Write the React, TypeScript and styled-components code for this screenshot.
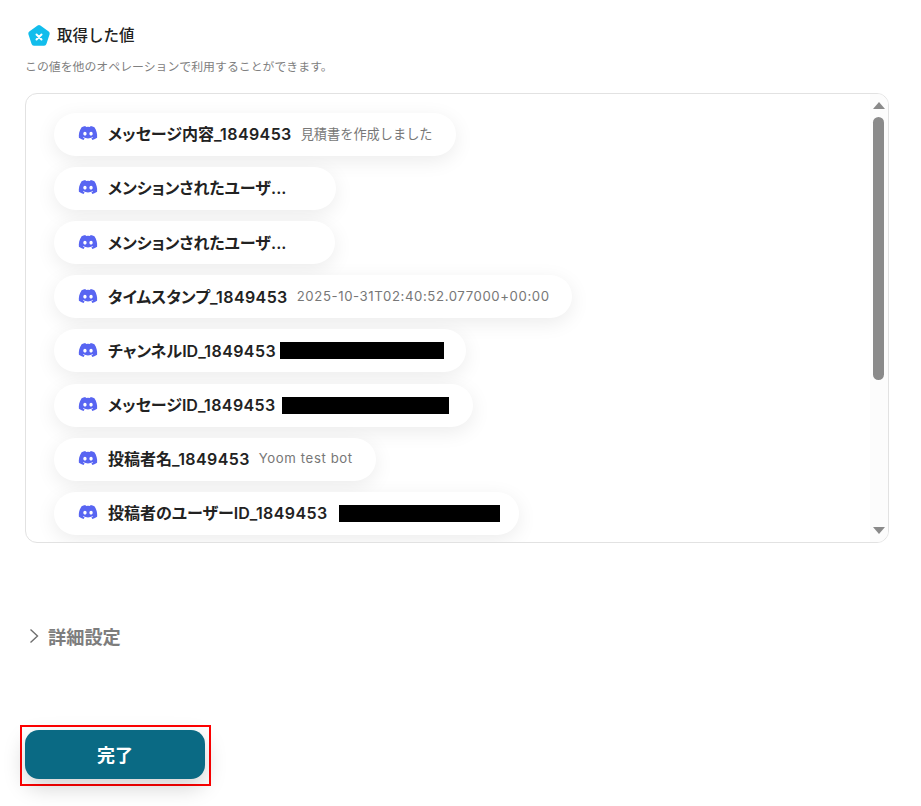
import React from 'react'
import styled, { createGlobalStyle } from 'styled-components'
import { FaDiscord } from 'react-icons/fa'

const Global = createGlobalStyle`
  html, body { margin: 0; padding: 0; background: #fff; }
  body { font-family: Inter, "Noto Sans CJK JP", sans-serif; color: #222; }
`

const Page = styled.div`
  width: 921px;
  height: 806px;
  box-sizing: border-box;
  padding: 23px 32px 0 25px;
  overflow: hidden;
`

const Heading = styled.div`
  display: flex;
  align-items: center;
  gap: 6px;
  height: 26px;
  padding-left: 2px;
`

const HeadingText = styled.h2`
  margin: 0;
  font-size: 15.5px;
  font-weight: 500;
  line-height: 26px;
  color: #222;
`

const Note = styled.p`
  margin: 9px 0 0;
  font-size: 11.9px;
  line-height: 18px;
  color: #808080;
`

const Panel = styled.div`
  display: flex;
  height: 450px;
  box-sizing: border-box;
  margin-top: 17px;
  border: 1px solid #e2e2e2;
  border-radius: 12px;
  overflow: hidden;
`

const List = styled.div`
  flex: 1;
  display: flex;
  flex-direction: column;
  align-items: flex-start;
  gap: 11.15px;
  padding: 18.85px 0 0 28px;
  overflow: hidden;
`

const Pill = styled.div<{ $width: number }>`
  flex: none;
  display: flex;
  align-items: center;
  width: ${(p) => p.$width}px;
  height: 43px;
  box-sizing: border-box;
  padding: 0 0 2px 24px;
  background: #fff;
  border-radius: 22px;
  box-shadow: 0 5px 20px rgba(0, 0, 0, 0.08);
`

const Logo = styled(FaDiscord)`
  flex: none;
  width: 20px;
  height: 20px;
  color: #5865f2;
  margin-right: 10px;
`

const Label = styled.span`
  font-size: 16px;
  font-weight: 600;
  font-feature-settings: 'palt';
  color: #222;
  white-space: nowrap;
`

const Suffix = styled.span`
  letter-spacing: 0.4px;
`

const Value = styled.span<{ $latin?: boolean }>`
  margin-left: 9px;
  font-size: 13.2px;
  letter-spacing: ${(p) => (p.$latin ? '0.6px' : '0')};
  color: #777;
  white-space: nowrap;
`

const Hidden = styled.span<{ $width: number; $gap: number }>`
  flex: none;
  position: relative;
  top: 1px;
  width: ${(p) => p.$width}px;
  height: 17px;
  margin-left: ${(p) => p.$gap}px;
  background: #000;
`

const Track = styled.div`
  flex: none;
  width: 18px;
  display: flex;
  flex-direction: column;
  align-items: center;
  padding: 8px 1px 8px 0;
  background: #fcfcfc;
  box-sizing: border-box;
`

const Arrow = styled.div<{ $down?: boolean }>`
  flex: none;
  width: 0;
  height: 0;
  border-left: 6.5px solid transparent;
  border-right: 6.5px solid transparent;
  ${(p) => (p.$down ? 'border-top: 7px solid #8a8a8a;' : 'border-bottom: 7px solid #8a8a8a;')}
`

const Thumb = styled.div`
  flex: none;
  width: 11px;
  height: 263px;
  margin-top: 8px;
  background: #8a8a8a;
  border-radius: 6px;
`

const Spacer = styled.div`
  flex: 1;
`

const Advanced = styled.div`
  display: flex;
  align-items: center;
  gap: 7px;
  height: 26px;
  margin-top: 80px;
  padding-left: 2px;
`

const AdvancedText = styled.span`
  font-size: 18.2px;
  font-weight: 700;
  color: #7d7d7d;
`

const Highlight = styled.div`
  width: 191px;
  height: 61px;
  box-sizing: border-box;
  margin: 76px 0 0 -5px;
  border: 2px solid #f00;
  padding: 3px;
`

const Done = styled.button`
  display: block;
  width: 180px;
  height: 49px;
  padding: 0 0 2px;
  border: 0;
  border-radius: 14px;
  background: #0a6a84;
  color: #fff;
  font-family: inherit;
  font-size: 18px;
  font-weight: 700;
  box-shadow: 0 8px 22px rgba(0, 0, 0, 0.18);
`

const Pentagon = () => (
  <svg width="24" height="24" viewBox="0 0 24 24">
    <path
      d="M10.6 1.500a2.400 2.400 0 0 1 2.800 0l8.300 6a2.400 2.400 0 0 1 .9 2.700l-3.200 9.900a2.400 2.400 0 0 1-2.300 1.700H6.900a2.400 2.400 0 0 1-2.300-1.700L1.400 10.200a2.400 2.400 0 0 1 .9-2.700z"
      fill="#12bdec"
    />
    <path d="M9.500 10.500l5 5M14.500 10.500l-5 5" stroke="#fff" strokeWidth="2" strokeLinecap="round" />
  </svg>
)

const Chevron = () => (
  <svg width="14" height="18" viewBox="0 0 14 18">
    <path d="M3.500 2.500l7 6.500-7 6.500" fill="none" stroke="#6f6f6f" strokeWidth="1.4" />
  </svg>
)

const rows = [
  { label: 'メッセージ内容', id: '_1849453', value: '見積書を作成しました', width: 402 },
  { label: 'メンションされたユーザ...', width: 282 },
  { label: 'メンションされたユーザ...', width: 281 },
  { label: 'タイムスタンプ', id: '_1849453', value: '2025-10-31T02:40:52.077000+00:00', latin: true, width: 518 },
  { label: 'チャンネルID', id: '_1849453', hidden: 164, gap: 4, width: 412 },
  { label: 'メッセージID', id: '_1849453', hidden: 167, gap: 6, width: 419 },
  { label: '投稿者名', id: '_1849453', value: 'Yoom test bot', latin: true, width: 322 },
  { label: '投稿者のユーザーID', id: '_1849453', hidden: 161, gap: 11, width: 465 },
]

export default function App() {
  return (
    <Page>
      <Global />
      <Heading>
        <Pentagon />
        <HeadingText>取得した値</HeadingText>
      </Heading>
      <Note>この値を他のオペレーションで利用することができます。</Note>
      <Panel>
        <List>
          {rows.map((row, i) => (
            <Pill key={i} $width={row.width}>
              <Logo />
              <Label>
                {row.label}
                {row.id && <Suffix>{row.id}</Suffix>}
              </Label>
              {row.value && <Value $latin={row.latin}>{row.value}</Value>}
              {row.hidden && <Hidden $width={row.hidden} $gap={row.gap} />}
            </Pill>
          ))}
        </List>
        <Track>
          <Arrow />
          <Thumb />
          <Spacer />
          <Arrow $down />
        </Track>
      </Panel>
      <Advanced>
        <Chevron />
        <AdvancedText>詳細設定</AdvancedText>
      </Advanced>
      <Highlight>
        <Done>完了</Done>
      </Highlight>
    </Page>
  )
}
